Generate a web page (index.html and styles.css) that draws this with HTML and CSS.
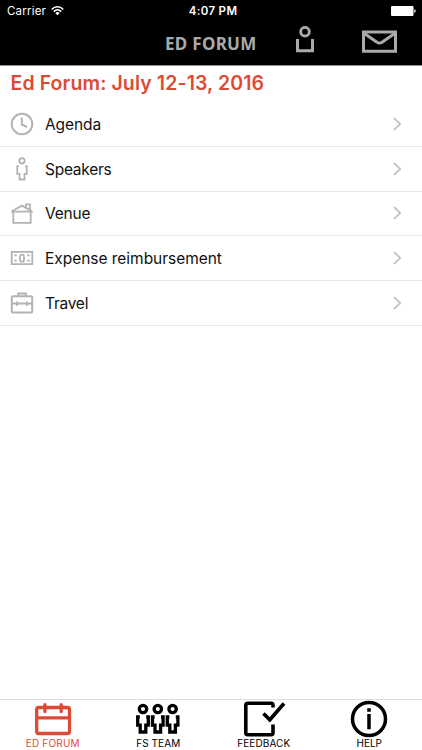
FILE: index.html
```html
<!DOCTYPE html>
<html lang="en">
<head>
<meta charset="utf-8">
<title>Ed Forum</title>
<link rel="stylesheet" href="styles.css">
</head>
<body>
<div class="app">
  <header class="header">
    <div class="status">
      <div class="carrier"><span class="carrier-name">Carrier</span>
        <svg width="13" height="10" viewBox="0 0 13 10" fill="none" stroke="#fff" stroke-width="1.5"><path d="M.7 3.500C4-.1 9-.1 12.300 3.500M2.800 5.600C5 3.400 8 3.400 10.200 5.600"/><path d="M4.300 7Q6.500 5.200 8.700 7L6.500 9.200Z" fill="#fff" stroke="none"/></svg>
      </div>
      <span class="time">4:07 PM</span>
      <svg class="battery" width="25" height="10" viewBox="0 0 25 10" fill="#fff"><rect width="22.500" height="10" rx="1"/><path d="M23.300 3.200q1.400.3 1.400 1.800t-1.400 1.800z"/></svg>
    </div>
    <div class="navbar">
      <span class="nav-title">ED FORUM</span>
      <svg class="nav-person" width="18" height="27" viewBox="0 0 18 27" fill="none" stroke="#aaa"><circle cx="9" cy="5.700" r="4.300" stroke-width="2.900"/><path d="M1.500 13v11.700h15V13" stroke-width="3"/></svg>
      <svg class="nav-mail" width="35" height="23" viewBox="0 0 35 23" fill="none" stroke="#aaa" stroke-width="3"><path d="M1.500 1.900h32v19.400h-32z"/><path d="M2 3.200l13 9q2.500 1.600 5 0l13-9"/></svg>
    </div>
  </header>
  <main class="content">
    <h1 class="title"><span>Ed Forum: July 12-13, 2016</span></h1>
    <ul class="list">
      <li class="row">
        <svg class="icon" width="24" height="26" viewBox="0 0 24 26"><circle cx="12" cy="13" r="10.300"/><path d="M11.800 6.500V13.500L17 16"/></svg>
        <span class="label agenda">Agenda</span>
        <svg class="chevron" width="9" height="14" viewBox="0 0 9 14"><path d="M1 1l6.200 6L1 13"/></svg>
      </li>
      <li class="row">
        <svg class="icon thin" width="24" height="26" viewBox="0 0 24 26"><circle cx="12" cy="4.800" r="2.700"/><path d="M8.800 10.200H7.200v7.600h2.300v5.700h5v-5.700h2.300v-7.600h-1.600"/></svg>
        <span class="label speakers">Speakers</span>
        <svg class="chevron" width="9" height="14" viewBox="0 0 9 14"><path d="M1 1l6.200 6L1 13"/></svg>
      </li>
      <li class="row">
        <svg class="icon thin" width="24" height="26" viewBox="0 0 24 26"><path d="M3.300 12v10.800h17.400V12M1.200 11.600h21.600M1.700 11.300L12 5.600l9.600 5.500M16 7.200V4.300h4v6"/></svg>
        <span class="label venue">Venue</span>
        <svg class="chevron" width="9" height="14" viewBox="0 0 9 14"><path d="M1 1l6.200 6L1 13"/></svg>
      </li>
      <li class="row">
        <svg class="icon thin" width="24" height="26" viewBox="0 0 24 26"><path d="M1.700 6.900h20.600v12.300H1.700z"/><rect x="10" y="9.700" width="4" height="7" rx="2"/><path d="M4.300 10.300h2.500M4.300 15.700h2.500M17.200 10.300h2.500M17.200 15.700h2.500"/></svg>
        <span class="label expense">Expense reimbursement</span>
        <svg class="chevron" width="9" height="14" viewBox="0 0 9 14"><path d="M1 1l6.200 6L1 13"/></svg>
      </li>
      <li class="row">
        <svg class="icon" width="24" height="26" viewBox="0 0 24 26"><rect x="1.800" y="6.300" width="20.400" height="16.300" rx="1.200"/><path d="M8.200 6V3.500h7.600V6M2 13.600h20M7 11.500v4.200M17 11.500v4.200"/></svg>
        <span class="label travel">Travel</span>
        <svg class="chevron" width="9" height="14" viewBox="0 0 9 14"><path d="M1 1l6.200 6L1 13"/></svg>
      </li>
    </ul>
  </main>
  <nav class="tabs">
    <div class="tab active">
      <svg width="40" height="38" viewBox="0 0 40 38" fill="none" stroke="currentColor" stroke-width="3.300"><rect x="3.700" y="7.500" width="32.800" height="26" rx="2"/><path d="M3.700 17.800h32.800"/><path d="M11.900 4.600v7M28.200 4.600v7" stroke-linecap="round"/></svg>
      <span class="tab-label ed">ED FORUM</span>
    </div>
    <div class="tab">
      <svg width="46" height="38" viewBox="0 0 46 38" fill="none" stroke="currentColor" stroke-width="3.300"><circle cx="8" cy="9" r="3.700"/><circle cx="22.800" cy="9" r="3.700"/><circle cx="37.600" cy="9" r="3.700"/><path d="M4.800 17H2.700v8.200h2.500v6.800h5.600v-6.800h2.500V17h-2.100M19.600 17h-2.100v8.200H20v6.800h5.600v-6.800h2.500V17H26M34.400 17h-2.100v8.200h2.500v6.800h5.600v-6.800h2.500V17h-2.100"/></svg>
      <span class="tab-label team">FS TEAM</span>
    </div>
    <div class="tab">
      <svg width="44" height="38" viewBox="0 0 44 38" fill="none" stroke="currentColor" stroke-width="3.600"><path d="M31 7.500V5.200q0-2-2-2H5.800q-2 0-2 2v27.600q0 2 2 2H29q2 0 2-2V24.500"/><path d="M21.500 13.500l6.300 6.300L42 3.500"/></svg>
      <span class="tab-label feedback">FEEDBACK</span>
    </div>
    <div class="tab">
      <svg width="40" height="38" viewBox="0 0 40 38" fill="none" stroke="currentColor" stroke-width="3.500"><circle cx="20" cy="19" r="16.500"/><path d="M20 8.200v3.600M20 14v15.300"/></svg>
      <span class="tab-label help">HELP</span>
    </div>
  </nav>
</div>
</body>
</html>
```
FILE: styles.css
```css
* { box-sizing: border-box; }
body { margin: 0; background: #fff; color: #111; font-family: Inter, "Liberation Sans", sans-serif; }
.app { width: 422px; height: 750px; display: flex; flex-direction: column; overflow: hidden; }
svg { display: block; flex: none; }
span { white-space: nowrap; }
.header { height: 66px; background: #000; border-bottom: 1px solid #8e8e8e; flex: none; }
.status { height: 22px; color: #fff; display: grid; grid-template-columns: 1fr auto 1fr; align-items: center; padding: 0 6px 0 7px; font-size: 11.5px; line-height: 22px; }
.carrier { display: flex; align-items: center; gap: 5px; }
.carrier-name { letter-spacing: .2px; }
.time { font-weight: 600; letter-spacing: .35px; padding-left: 3px; }
.battery { justify-self: end; }
.navbar { height: 43px; display: flex; padding-left: 165px; }
.nav-title { width: 131px; color: #aaa; font: 700 17px/43px "Noto Sans", sans-serif; letter-spacing: .3px; }
.nav-person { margin-top: 4px; }
.nav-mail { margin: 8px 0 0 48px; }
.content { flex: 1; }
.title { margin: 0; height: 36px; padding-left: 10.5px; color: #dc4a36; font-size: 19.5px; line-height: 35px; font-weight: 600; letter-spacing: .1px; }
.list { list-style: none; margin: 0; padding: 0; }
.row { height: 44.8px; border-bottom: 1px solid #e7e7e7; display: flex; align-items: center; padding: 0 20px 0 10px; }
.icon { fill: none; stroke: #b3b3b3; stroke-width: 2; }
.thin { stroke-width: 1.8; }
.label { margin-left: 11px; padding-top: 2px; font-size: 15.5px; line-height: 24px; color: #111; }
.agenda { letter-spacing: -.1px; }
.speakers { letter-spacing: -.25px; }
.venue { letter-spacing: -.2px; }
.expense { letter-spacing: -.03px; }
.travel { letter-spacing: -.25px; }
.chevron { margin-left: auto; fill: none; stroke: #c4c4c8; stroke-width: 1.8; }
.tabs { height: 51px; border-top: 1px solid #ddd; display: grid; grid-template-columns: repeat(4, 1fr); background: #fff; }
.tab { display: flex; flex-direction: column; align-items: center; color: #000; }
.tab.active { color: #dc4a36; }
.tab-label { font-size: 10px; line-height: 10px; }
.ed { letter-spacing: .2px; }
.team { letter-spacing: .1px; }
.feedback { letter-spacing: .1px; }
```
